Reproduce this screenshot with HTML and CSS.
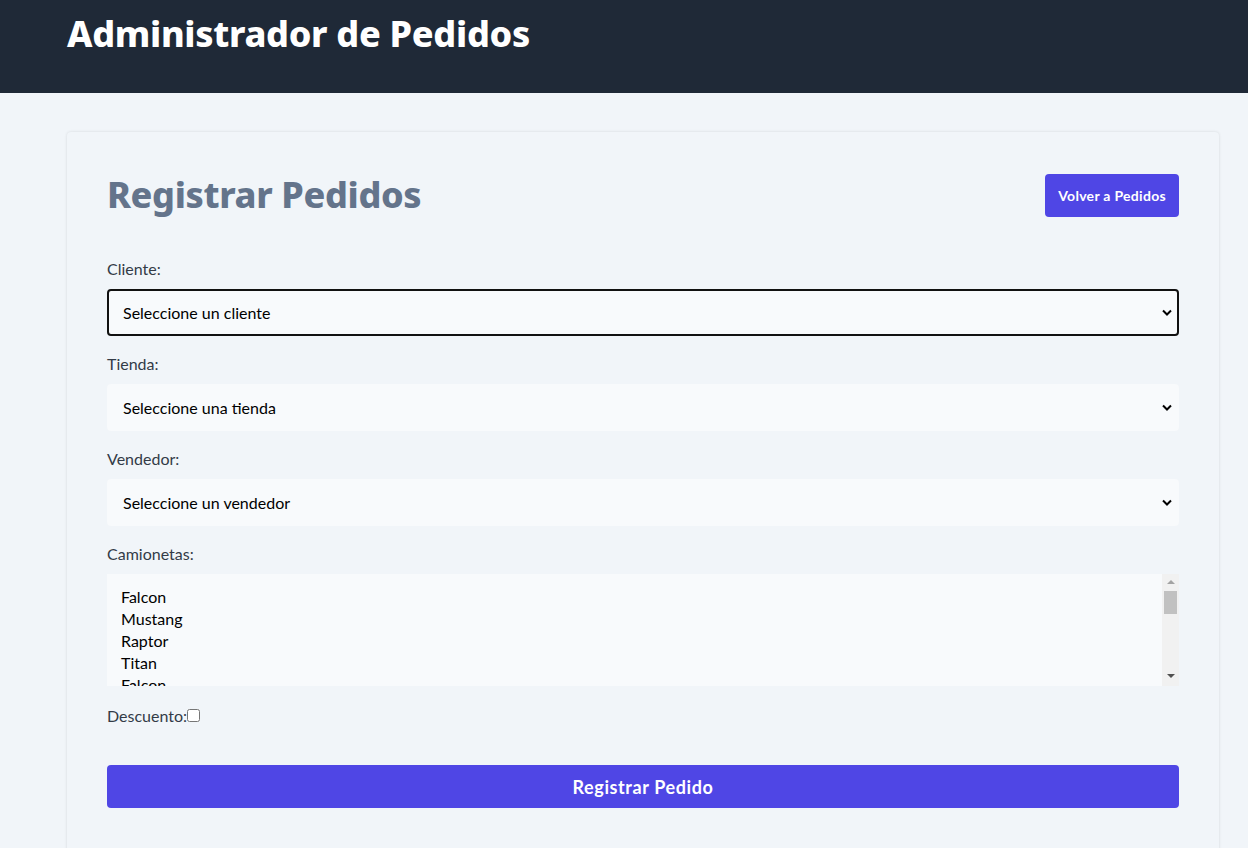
FILE: index.html
```html
<!DOCTYPE html>
<html lang="es">
<head>
<meta charset="utf-8">
<title>Administrador de Pedidos</title>
<link rel="stylesheet" href="styles.css">
</head>
<body>
<header class="topbar">
  <h1 class="brand">Administrador de Pedidos</h1>
</header>
<main class="card">
  <div class="card-head">
    <h2 class="title">Registrar Pedidos</h2>
    <a class="btn-back" href="#">Volver a Pedidos</a>
  </div>
  <form class="form">
    <div class="field">
      <label class="label" for="cliente">Cliente:</label>
      <select id="cliente" class="select focused">
        <option>Seleccione un cliente</option>
      </select>
    </div>
    <div class="field">
      <label class="label" for="tienda">Tienda:</label>
      <select id="tienda" class="select">
        <option>Seleccione una tienda</option>
      </select>
    </div>
    <div class="field">
      <label class="label" for="vendedor">Vendedor:</label>
      <select id="vendedor" class="select">
        <option>Seleccione un vendedor</option>
      </select>
    </div>
    <div class="field">
      <label class="label" for="camionetas">Camionetas:</label>
      <div class="multi-box">
        <select id="camionetas" class="multi" multiple>
          <option>Falcon</option>
          <option>Mustang</option>
          <option>Raptor</option>
          <option>Titan</option>
          <option>Falcon</option>
          <option>Mustang</option>
          <option>Raptor</option>
          <option>Titan</option>
        </select>
        <div class="scrollbar" aria-hidden="true">
          <span class="arrow-up"></span>
          <span class="thumb"></span>
          <span class="track"></span>
          <span class="arrow-down"></span>
        </div>
      </div>
    </div>
    <div class="check-row">
      <label class="label" for="descuento">Descuento:</label><input id="descuento" class="check" type="checkbox">
    </div>
    <button type="button" class="btn-submit">Registrar Pedido</button>
  </form>
</main>
</body>
</html>
```
FILE: styles.css
```css
* { box-sizing: border-box; }
html, body { margin: 0; padding: 0; }
body {
  background: #f1f5f9;
  font-family: Lato, "Noto Sans", sans-serif;
  color: #111827;
  height: 848px;
  overflow: hidden;
}
.topbar {
  background: #1f2937;
  height: 93px;
  padding: 14px 0 0 67px;
}
.brand {
  margin: 0;
  color: #fff;
  font-family: "Noto Sans", sans-serif;
  font-size: 36px;
  line-height: 40px;
  font-weight: 800;
  letter-spacing: -0.3px;
}
.card {
  margin: 39px 0 0 67px;
  width: 1152px;
  padding: 40px;
  background: #f1f5f9;
  box-shadow: 0 0 3px rgba(0, 0, 0, 0.12);
  border-radius: 4px;
  min-height: 740px;
}
.card-head {
  display: flex;
  justify-content: space-between;
  align-items: center;
  height: 45px;
  margin-bottom: 40px;
}
.title {
  margin: 1px 0 0;
  color: #64748b;
  font-family: "Noto Sans", sans-serif;
  font-size: 36px;
  line-height: 40px;
  font-weight: 800;
  letter-spacing: -0.35px;
}
.btn-back {
  display: flex;
  align-items: center;
  height: 43px;
  padding: 0 13px;
  background: #4f46e5;
  color: #fff;
  font-size: 14px;
  font-weight: 700;
  letter-spacing: 0.3px;
  text-decoration: none;
  border-radius: 4px;
  margin-top: 1px;
}
.form { display: flex; flex-direction: column; }
.field { display: flex; flex-direction: column; margin-bottom: 16px; }
.label {
  display: block;
  font-size: 16px;
  line-height: 24px;
  color: #333b47;
  margin-bottom: 8px;
}
.select {
  appearance: none;
  -webkit-appearance: none;
  width: 100%;
  height: 47px;
  padding: 0 40px 0 14px;
  font-family: inherit;
  font-size: 16px;
  color: #000;
  background-color: #f8fafc;
  background-image: url("data:image/svg+xml,%3Csvg xmlns='http://www.w3.org/2000/svg' width='10' height='7' viewBox='0 0 10 7'%3E%3Cpath d='M1 1.5 L5 5.5 L9 1.5' fill='none' stroke='%23000' stroke-width='2'/%3E%3C/svg%3E");
  background-repeat: no-repeat;
  background-position: right 5px center;
  border: 2px solid transparent;
  border-radius: 4px;
  outline: none;
}
.select.focused { border-color: #111; }
.multi-box {
  display: flex;
  height: 112px;
  background: #f8fafc;
}
.multi {
  flex: 1;
  height: 112px;
  padding: 13px 0 0 12px;
  font-family: inherit;
  font-size: 16px;
  color: #000;
  background: #f8fafc;
  border: none;
  outline: none;
  overflow: hidden;
  scrollbar-width: none;
}
.multi option { padding: 0 2px; line-height: 22px; height: 22px; }
.scrollbar {
  width: 17px;
  background: #f1f1f1;
  display: flex;
  flex-direction: column;
  align-items: center;
}
.arrow-up {
  margin-top: 6px;
  width: 0; height: 0;
  border-left: 4px solid transparent;
  border-right: 4px solid transparent;
  border-bottom: 4px solid #a3a3a3;
}
.thumb {
  margin-top: 7px;
  width: 13px;
  height: 23px;
  background: #c1c1c1;
}
.track { flex: 1; }
.arrow-down {
  margin-bottom: 8px;
  width: 0; height: 0;
  border-left: 4px solid transparent;
  border-right: 4px solid transparent;
  border-top: 4px solid #505050;
}
.check-row {
  display: flex;
  align-items: center;
  margin: 2px 0 37px;
}
.check-row .label { margin: 0; }
.check {
  width: 13px;
  height: 13px;
  margin: 0 0 1px 0;
}
.btn-submit {
  height: 43px;
  width: 100%;
  border: none;
  border-radius: 4px;
  background: #4f46e5;
  color: #fff;
  font-family: inherit;
  font-size: 18px;
  font-weight: 700;
  letter-spacing: 0.6px;
}
```
